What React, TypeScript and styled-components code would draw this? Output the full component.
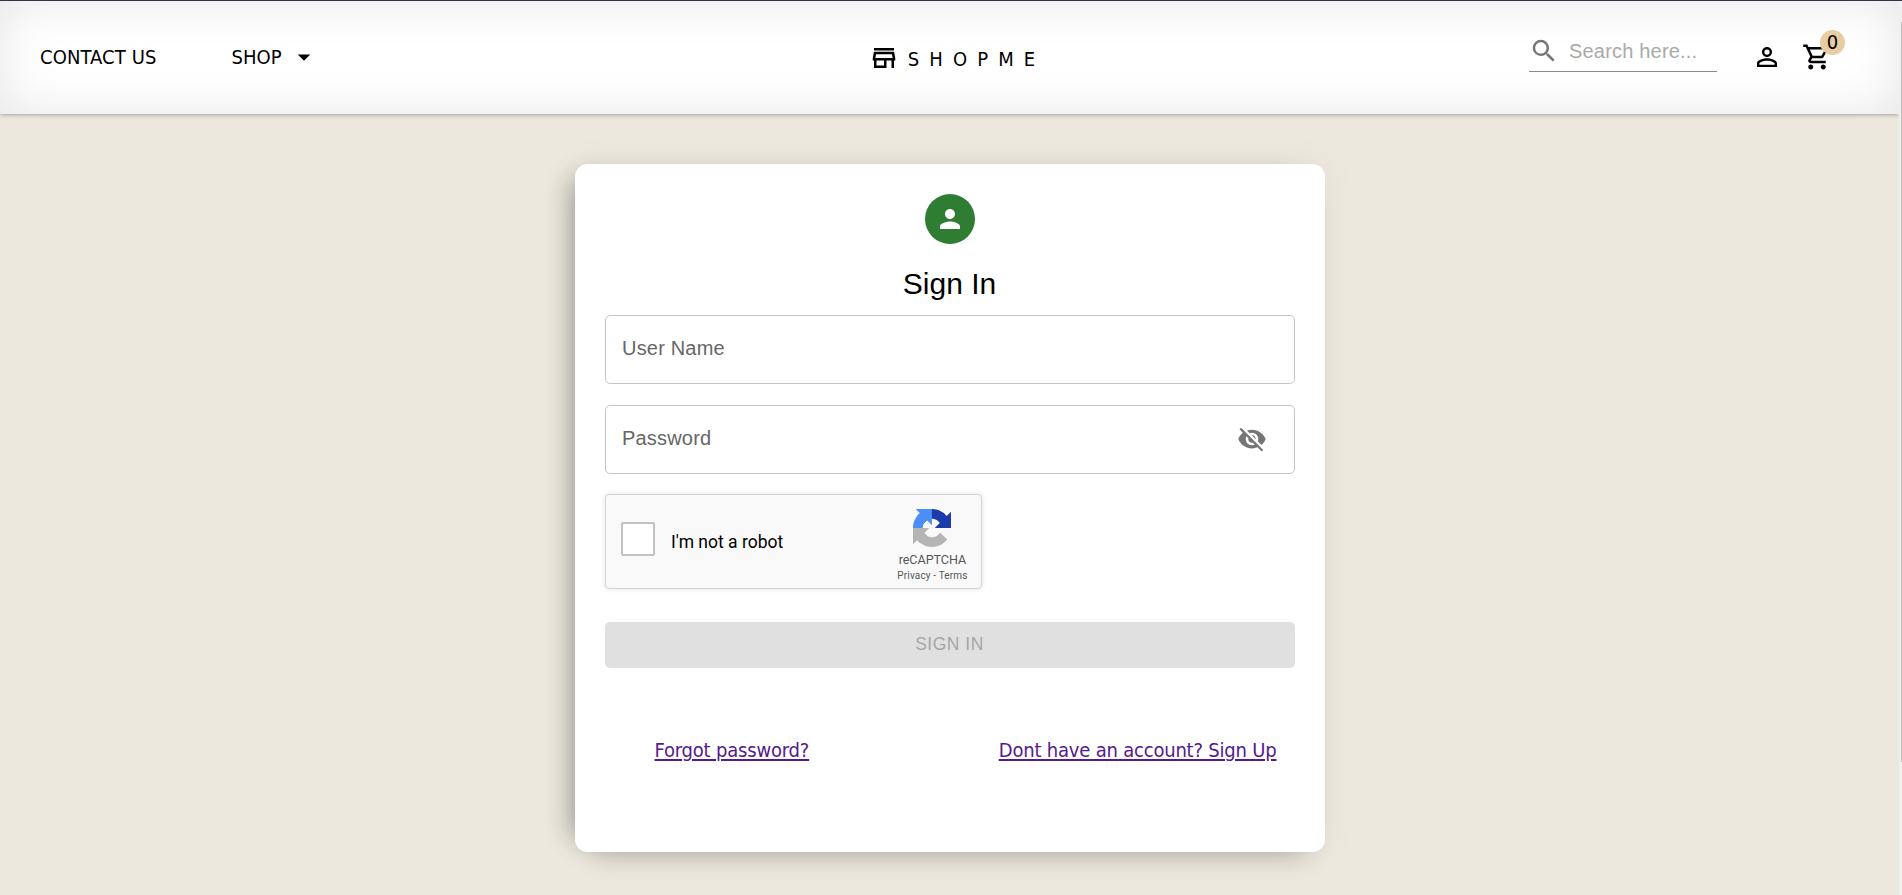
import React from "react";
import styled, { createGlobalStyle } from "styled-components";
import {
  MdArrowDropDown,
  MdOutlineShoppingCart,
  MdOutlineStore,
  MdPerson,
  MdPersonOutline,
  MdSearch,
  MdVisibilityOff,
} from "react-icons/md";

const humanist = `"DejaVu Sans Condensed", "DejaVu Sans", sans-serif`;
const grotesque = `"Liberation Sans", Arial, sans-serif`;

const GlobalStyle = createGlobalStyle`
  *, *::before, *::after { box-sizing: border-box; }
  html, body { margin: 0; padding: 0; overflow: hidden; }
  body { background: #ece8dd; color: #000; font-family: ${humanist}; font-size: 20px; }
`;

const Page = styled.div`
  display: grid;
  grid-template-columns: 1fr 3px;
  height: 895px;
  border-top: 1px solid #333345;
  overflow: hidden;
`;

const Content = styled.div`
  display: flex;
  flex-direction: column;
  align-items: center;
  overflow: hidden;
`;

const ScrollTrack = styled.div`
  display: flex;
  justify-content: flex-end;
  padding-top: 21px;
  background: #f0f0f0;
`;

const ScrollThumb = styled.div`
  width: 1px;
  height: 740px;
  background: #bdbdbd;
`;

const Header = styled.header`
  display: grid;
  grid-template-columns: 1fr auto 1fr;
  align-items: center;
  align-self: stretch;
  flex: none;
  height: 113px;
  padding: 0 55px 1px 40px;
  background: #fff;
  box-shadow: 0 1px 4px rgba(0, 0, 0, 0.3), 0 0 50px rgba(0, 0, 0, 0.1) inset;
`;

const Nav = styled.nav`
  display: flex;
  align-items: center;
  gap: 75px;
`;

const NavItem = styled.a`
  display: flex;
  align-items: center;
  gap: 7px;
  letter-spacing: 0.1px;
  line-height: 30px;
`;

const Brand = styled.div`
  display: flex;
  align-items: center;
  gap: 9px;
  margin-left: 30px;
  padding-top: 2px;
`;

const BrandName = styled.span`
  padding-top: 2px;
  letter-spacing: 10.1px;
  line-height: 30px;
`;

const Tools = styled.div`
  display: flex;
  justify-content: flex-end;
  align-items: center;
`;

const SearchBox = styled.label`
  display: flex;
  align-items: center;
  width: 188px;
  height: 41px;
  margin: 0 35px 11px 0;
  border-bottom: 1px solid #8c8c8c;
  color: #757575;
`;

const SearchInput = styled.input`
  width: 140px;
  margin-left: 10px;
  padding: 0;
  border: 0;
  outline: 0;
  background: transparent;
  font: 20px ${grotesque};
  letter-spacing: 0.19px;
  &::placeholder { color: #a9a9a9; opacity: 1; }
`;

const CartButton = styled.div`
  position: relative;
  display: flex;
  margin-left: 20px;
  margin-right: 12px;
`;

const CartCount = styled.span`
  position: absolute;
  top: -12px;
  right: -13px;
  width: 25px;
  height: 25px;
  border-radius: 50%;
  background: #e7cca4;
  line-height: 25px;
  text-align: center;
`;

const Card = styled.form`
  display: flex;
  flex-direction: column;
  flex: none;
  width: 750px;
  height: 688px;
  margin-top: 50px;
  padding: 30px;
  border-radius: 12.5px;
  background: #fff;
  box-shadow:
    -19px 0 25px -16px rgba(0, 0, 0, 0.32),
    0 21px 25px -18px rgba(0, 0, 0, 0.2),
    0 0 38px rgba(0, 0, 0, 0.05);
`;

const Avatar = styled.div`
  display: flex;
  align-items: center;
  justify-content: center;
  align-self: center;
  width: 50px;
  height: 50px;
  border-radius: 50%;
  background: #2e7d32;
  color: #fff;
`;

const Title = styled.h1`
  margin: 20px 0 11px;
  font: 400 30px/40px ${grotesque};
  text-align: center;
`;

const Field = styled.div`
  display: flex;
  align-items: center;
  justify-content: space-between;
  height: 69px;
  margin-bottom: 21px;
  padding: 0 27px 0 16.5px;
  border: 1px solid #c4c4c4;
  border-radius: 5px;
  color: #666;
  font: 20px/30px ${grotesque};
  letter-spacing: 0.19px;
`;

const FieldLabel = styled.span`
  padding-bottom: 4px;
`;

const ToggleIcon = styled(MdVisibilityOff)`
  margin-bottom: 1px;
  color: #757575;
`;

const Captcha = styled.div`
  display: flex;
  align-items: center;
  width: 377px;
  height: 95px;
  margin-top: -1px;
  padding: 0 13px 0 15px;
  border: 1px solid #d3d3d3;
  border-radius: 4px;
  background: #f9f9f9;
  box-shadow: 0 0 5px 1px rgba(0, 0, 0, 0.08);
  font-family: Roboto, sans-serif;
`;

const CheckBox = styled.span`
  width: 34px;
  height: 34px;
  margin-bottom: 5px;
  border: 2px solid #c1c1c1;
  border-radius: 2px;
  background: #fff;
`;

const CaptchaLabel = styled.span`
  flex: 1;
  margin-left: 16.5px;
  font-size: 17.5px;
  line-height: 22px;
`;

const CaptchaBrand = styled.div`
  display: flex;
  flex-direction: column;
  align-items: center;
  padding-top: 8px;
  color: #555;
`;

const CaptchaName = styled.span`
  margin-top: 5px;
  font-size: 12.5px;
  line-height: 15px;
`;

const CaptchaTerms = styled.span`
  margin-top: 2px;
  font-size: 10px;
  line-height: 13px;
  letter-spacing: 0.15px;
`;

const SubmitButton = styled.button`
  height: 46px;
  margin-top: 33px;
  padding: 0 0 2px;
  border: 0;
  border-radius: 5px;
  background: #e0e0e0;
  color: #a6a6a6;
  font: 17.5px ${grotesque};
  letter-spacing: 0.5px;
`;

const Links = styled.div`
  display: flex;
  justify-content: space-between;
  margin-top: 67px;
  padding: 0 18px 0 50px;
`;

const TextLink = styled.a`
  color: #551a8b;
  letter-spacing: -0.2px;
  line-height: 30px;
  text-decoration: underline;
  text-decoration-thickness: 2px;
  text-underline-offset: 2px;
`;

const CaptchaLogo = () => (
  <svg width="38" height="38" viewBox="0 0 64 64">
    <path fill="#1c3aa9" d="M64 31.955l-.033-1.37V4.687l-7.16 7.16C50.948 4.674 42.033.093 32.05.093c-10.4 0-19.622 4.96-25.458 12.64l11.736 11.86a15.55 15.55 0 0 1 4.754-5.334c2.05-1.6 4.952-2.906 8.968-2.906.485 0 .86.057 1.135.163 4.976.393 9.288 3.14 11.828 7.124l-8.307 8.307L64 31.953" />
    <path fill="#4b8ef7" d="M31.862.094l-1.37.033H4.594l7.16 7.16C4.58 13.147 0 22.06 0 32.046c0 10.4 4.96 19.622 12.64 25.458L24.5 45.768a15.55 15.55 0 0 1-5.334-4.754c-1.6-2.05-2.906-4.952-2.906-8.968 0-.485.057-.86.163-1.135.393-4.976 3.14-9.288 7.124-11.828l8.307 8.307L31.86.095" />
    <path fill="#b5b5b5" d="M.001 32.045l.033 1.37v25.898l7.16-7.16c5.86 7.173 14.774 11.754 24.76 11.754 10.4 0 19.622-4.96 25.458-12.64l-11.736-11.86a15.55 15.55 0 0 1-4.754 5.334c-2.05 1.6-4.952 2.906-8.968 2.906-.485 0-.86-.057-1.135-.163-4.976-.393-9.288-3.14-11.828-7.124l8.307-8.307c-10.522.04-22.4.066-27.295-.005" />
  </svg>
);

export default function App() {
  return (
    <>
      <GlobalStyle />
      <Page>
        <Content>
          <Header>
            <Nav>
              <NavItem>CONTACT US</NavItem>
              <NavItem>
                SHOP
                <MdArrowDropDown size={30} />
              </NavItem>
            </Nav>
            <Brand>
              <MdOutlineStore size={30} />
              <BrandName>SHOPME</BrandName>
            </Brand>
            <Tools>
              <SearchBox>
                <MdSearch size={30} />
                <SearchInput placeholder="Search here..." />
              </SearchBox>
              <MdPersonOutline size={30} />
              <CartButton>
                <MdOutlineShoppingCart size={30} />
                <CartCount>0</CartCount>
              </CartButton>
            </Tools>
          </Header>
          <Card>
            <Avatar>
              <MdPerson size={30} />
            </Avatar>
            <Title>Sign In</Title>
            <Field>
              <FieldLabel>User Name</FieldLabel>
            </Field>
            <Field>
              <FieldLabel>Password</FieldLabel>
              <ToggleIcon size={30} />
            </Field>
            <Captcha>
              <CheckBox />
              <CaptchaLabel>I'm not a robot</CaptchaLabel>
              <CaptchaBrand>
                <CaptchaLogo />
                <CaptchaName>reCAPTCHA</CaptchaName>
                <CaptchaTerms>Privacy - Terms</CaptchaTerms>
              </CaptchaBrand>
            </Captcha>
            <SubmitButton disabled>SIGN IN</SubmitButton>
            <Links>
              <TextLink>Forgot password?</TextLink>
              <TextLink>Dont have an account? Sign Up</TextLink>
            </Links>
          </Card>
        </Content>
        <ScrollTrack>
          <ScrollThumb />
        </ScrollTrack>
      </Page>
    </>
  );
}
